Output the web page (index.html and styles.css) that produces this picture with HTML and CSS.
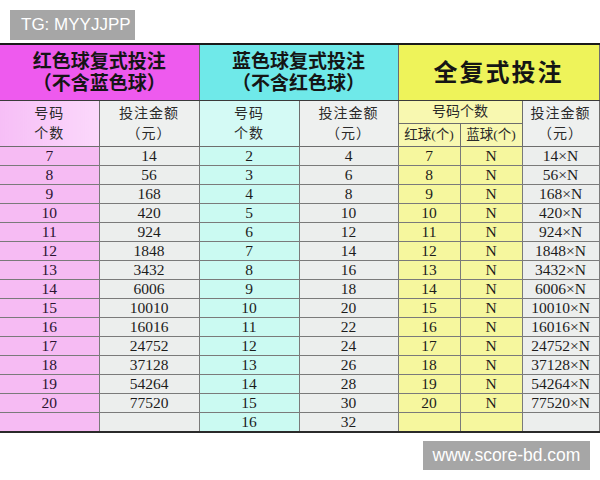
FILE: index.html
```html
<!DOCTYPE html>
<html lang="zh">
<head>
<meta charset="utf-8">
<link rel="stylesheet" href="styles.css">
</head>
<body>
<div class="page">
  <div class="tag tag-top">TG: MYYJJPP</div>
  <table class="grid">
    <colgroup>
      <col class="c1"><col class="c2"><col class="c3"><col class="c4"><col class="c5"><col class="c6"><col class="c7">
    </colgroup>
    <thead>
      <tr class="h1">
        <th colspan="2" class="hred">红色球复式投注<br>（不含蓝色球）</th>
        <th colspan="2" class="hblue">蓝色球复式投注<br>（不含红色球）</th>
        <th colspan="3" class="hall">全复式投注</th>
      </tr>
      <tr class="h2">
        <th rowspan="2" class="sred">号码<br>个数</th>
        <th rowspan="2" class="sgrey">投注金额<br>（元）</th>
        <th rowspan="2" class="sblue">号码<br>个数</th>
        <th rowspan="2" class="sgrey">投注金额<br>（元）</th>
        <th colspan="2" class="syel">号码个数</th>
        <th rowspan="2" class="sgrey">投注金额<br>（元）</th>
      </tr>
      <tr class="h3">
        <th class="syel small">红球(个)</th>
        <th class="syel small">蓝球(个)</th>
      </tr>
    </thead>
    <tbody>
      <tr><td class="dred">7</td><td class="dgrey">14</td><td class="dblue">2</td><td class="dgrey">4</td><td class="dyel">7</td><td class="dyel">N</td><td class="dgrey">14×N</td></tr>
      <tr><td class="dred">8</td><td class="dgrey">56</td><td class="dblue">3</td><td class="dgrey">6</td><td class="dyel">8</td><td class="dyel">N</td><td class="dgrey">56×N</td></tr>
      <tr><td class="dred">9</td><td class="dgrey">168</td><td class="dblue">4</td><td class="dgrey">8</td><td class="dyel">9</td><td class="dyel">N</td><td class="dgrey">168×N</td></tr>
      <tr><td class="dred">10</td><td class="dgrey">420</td><td class="dblue">5</td><td class="dgrey">10</td><td class="dyel">10</td><td class="dyel">N</td><td class="dgrey">420×N</td></tr>
      <tr><td class="dred">11</td><td class="dgrey">924</td><td class="dblue">6</td><td class="dgrey">12</td><td class="dyel">11</td><td class="dyel">N</td><td class="dgrey">924×N</td></tr>
      <tr><td class="dred">12</td><td class="dgrey">1848</td><td class="dblue">7</td><td class="dgrey">14</td><td class="dyel">12</td><td class="dyel">N</td><td class="dgrey">1848×N</td></tr>
      <tr><td class="dred">13</td><td class="dgrey">3432</td><td class="dblue">8</td><td class="dgrey">16</td><td class="dyel">13</td><td class="dyel">N</td><td class="dgrey">3432×N</td></tr>
      <tr><td class="dred">14</td><td class="dgrey">6006</td><td class="dblue">9</td><td class="dgrey">18</td><td class="dyel">14</td><td class="dyel">N</td><td class="dgrey">6006×N</td></tr>
      <tr><td class="dred">15</td><td class="dgrey">10010</td><td class="dblue">10</td><td class="dgrey">20</td><td class="dyel">15</td><td class="dyel">N</td><td class="dgrey">10010×N</td></tr>
      <tr><td class="dred">16</td><td class="dgrey">16016</td><td class="dblue">11</td><td class="dgrey">22</td><td class="dyel">16</td><td class="dyel">N</td><td class="dgrey">16016×N</td></tr>
      <tr><td class="dred">17</td><td class="dgrey">24752</td><td class="dblue">12</td><td class="dgrey">24</td><td class="dyel">17</td><td class="dyel">N</td><td class="dgrey">24752×N</td></tr>
      <tr><td class="dred">18</td><td class="dgrey">37128</td><td class="dblue">13</td><td class="dgrey">26</td><td class="dyel">18</td><td class="dyel">N</td><td class="dgrey">37128×N</td></tr>
      <tr><td class="dred">19</td><td class="dgrey">54264</td><td class="dblue">14</td><td class="dgrey">28</td><td class="dyel">19</td><td class="dyel">N</td><td class="dgrey">54264×N</td></tr>
      <tr><td class="dred">20</td><td class="dgrey">77520</td><td class="dblue">15</td><td class="dgrey">30</td><td class="dyel">20</td><td class="dyel">N</td><td class="dgrey">77520×N</td></tr>
      <tr><td class="dred"></td><td class="dgrey"></td><td class="dblue">16</td><td class="dgrey">32</td><td class="dyel"></td><td class="dyel"></td><td class="dgrey"></td></tr>
    </tbody>
  </table>
  <div class="bottom">
    <div class="tag tag-bottom">www.score-bd.com</div>
  </div>
</div>
</body>
</html>
```
FILE: styles.css
```css
html, body {
  margin: 0;
  padding: 0;
  background: #ffffff;
}

.page {
  width: 600px;
  height: 480px;
  display: flex;
  flex-direction: column;
  padding-top: 10px;
  box-sizing: border-box;
}

.tag {
  background: #a6a6a6;
  color: #ffffff;
  font-family: "Liberation Sans", Arial, sans-serif;
  font-size: 17px;
  height: 30px;
  line-height: 30px;
  box-sizing: border-box;
}

.tag-top {
  align-self: flex-start;
  margin-left: 10px;
  width: 125px;
  padding-left: 11px;
  margin-bottom: 3px;
}

.bottom {
  display: flex;
  justify-content: flex-end;
  padding-right: 10px;
  padding-top: 8px;
}

.tag-bottom {
  width: 167px;
  height: 29px;
  line-height: 29px;
  text-align: center;
  font-size: 17.5px;
}

.grid {
  border-collapse: collapse;
  table-layout: fixed;
  width: 599px;
  font-family: "Liberation Serif", "Noto Sans CJK SC", serif;
  color: #1c1c1c;
  border-top: 2px solid #1a1a1a;
  border-bottom: 2px solid #2a2a2a;
  border-right: 1px solid #444;
}

.c1 { width: 99px; }
.c2 { width: 100px; }
.c3 { width: 100px; }
.c4 { width: 99px; }
.c5 { width: 62px; }
.c6 { width: 62px; }
.c7 { width: 77px; }

.grid th,
.grid td {
  padding: 0;
  text-align: center;
  border: 1px solid #6d6d6d;
  overflow: hidden;
  white-space: nowrap;
}

.grid tr > :first-child {
  border-left: none;
}

.h1 th {
  height: 55px;
  font-family: "Liberation Serif", "Noto Sans CJK SC", sans-serif;
  font-weight: 700;
  font-size: 19px;
  line-height: 22px;
  color: #151515;
  border-bottom: 1px solid #3a3a3a;
}

.hred { background: #ee5aee; }
.hblue { background: #6fe9e9; }
.hall {
  background: #eef35a;
  font-size: 24px !important;
  letter-spacing: 2px;
}

.h2 th,
.h3 th {
  font-family: "Liberation Serif", "Noto Sans CJK SC", sans-serif;
  font-weight: 400;
  font-size: 14px;
  line-height: 20px;
  color: #2a2a2a;
}

.h2 th { height: 22px; }
.h3 th { height: 22px; }

.h2 th[rowspan] { letter-spacing: 1px; }

.small {
  font-size: 13.5px !important;
}

.sred { background: linear-gradient(90deg, #f6bef6, #fbd8fb); }
.sblue { background: #d4faf5; }
.syel { background: #f8f8b0; }
.sgrey { background: #eef0ef; }

.grid tbody td {
  height: 18px;
  font-size: 15.5px;
  line-height: 18px;
  border-color: #7a7a7a;
}

.dred { background: #f6bbf3; color: #2a1430; }
.dblue { background: #cbfaf2; }
.dyel { background: #f6f79e; }
.dgrey { background: #eceeed; }
```
